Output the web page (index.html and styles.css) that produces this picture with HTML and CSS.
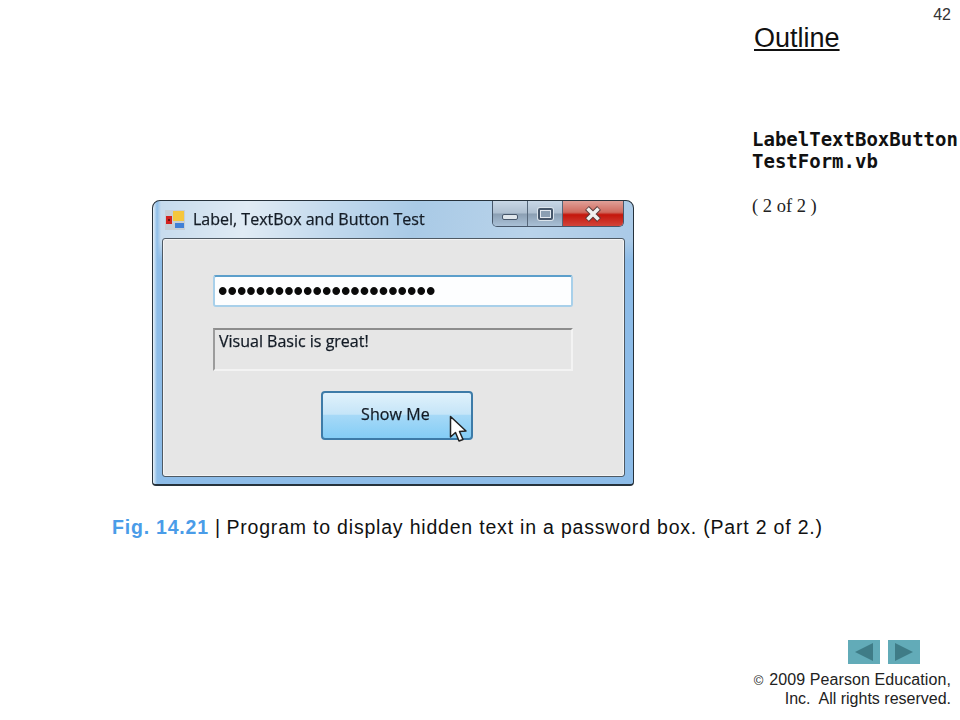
FILE: index.html
```html
<!DOCTYPE html>
<html>
<head>
  <title>Fig. 14.21</title>
  <link rel="stylesheet" href="styles.css">
</head>
<body>
  <div class="slide">
    <div class="upper">
      <div class="main">
        <div class="window">
          <div class="titlebar">
            <svg class="app-icon" width="20" height="20" viewBox="0 0 20 20">
              <rect x="0" y="0" width="20" height="20" fill="#c6ced6"/>
              <rect x="1" y="6" width="6" height="8" fill="#d3211f"/>
              <rect x="3" y="9" width="2" height="2" fill="#6b1010"/>
              <rect x="8" y="1" width="11" height="10" fill="#f5c63c"/>
              <rect x="10" y="13" width="9" height="5" fill="#3f7fd6"/>
            </svg>
            <span class="title">Label, TextBox and Button Test</span>
            <div class="controls">
              <div class="ctl ctl-min"><span class="min-glyph"></span></div>
              <div class="ctl ctl-max"><span class="max-glyph"></span></div>
              <div class="ctl ctl-close">
                <svg width="20" height="16" viewBox="0 0 20 16">
                  <path d="M4 2 L16 14 M16 2 L4 14" stroke="#5a3a3a" stroke-width="5.5"/>
                  <path d="M4.5 2.5 L15.5 13.5 M15.5 2.5 L4.5 13.5" stroke="#f0f0ee" stroke-width="3.6"/>
                </svg>
              </div>
            </div>
          </div>
          <div class="client">
            <div class="textbox">•••••••••••••••••••••••</div>
            <div class="label">Visual Basic is great!</div>
            <div class="button">
              Show Me
              <svg class="cursor" width="20" height="30" viewBox="0 0 20 30">
                <path d="M1.5 1.5 L1.5 22 L6.5 17.5 L10 26 L14 24.5 L10.5 16.5 L17 16 Z" fill="#fff" stroke="#222" stroke-width="1.5" stroke-linejoin="round"/>
              </svg>
            </div>
          </div>
        </div>
      </div>
      <div class="side">
        <div class="page-num">42</div>
        <div class="outline">Outline</div>
        <div class="filename">LabelTextBoxButton<br>TestForm.vb</div>
        <div class="part">( 2 of 2 )</div>
      </div>
    </div>
    <p class="caption"><b>Fig. 14.21</b><span class="bar">|</span>Program to display hidden text in a password box. (Part 2 of 2.)</p>
    <div class="footer">
      <div class="nav">
        <div class="nav-btn"><svg width="32" height="24" viewBox="0 0 32 24"><path d="M7 12 L25 3 L25 21 Z" fill="#3f7c87"/></svg></div>
        <div class="nav-btn"><svg width="32" height="24" viewBox="0 0 32 24"><path d="M25 12 L7 3 L7 21 Z" fill="#3f7c87"/></svg></div>
      </div>
      <div class="copy"><span class="copy-sign">©</span><span class="copy-first">2009 Pearson Education,</span><br>Inc.&nbsp; All rights reserved.</div>
    </div>
  </div>
</body>
</html>
```

FILE: styles.css
```css
html, body { margin: 0; padding: 0; background: #fff; }
body { font-family: "Liberation Sans", Arial, sans-serif; color: #111; }

.slide { width: 960px; height: 720px; display: flex; flex-direction: column; overflow: hidden; }
.upper { display: flex; height: 486px; }
.main { width: 752px; flex-shrink: 0; padding: 200px 0 0 152px; box-sizing: border-box; }

/* captured window */
.window {
  width: 482px; height: 286px; box-sizing: border-box; display: flex; flex-direction: column;
  padding: 0 9px 8px 9px; border: 1px solid #26323c; border-bottom-width: 2px; border-radius: 8px 8px 4px 4px;
  background:
    linear-gradient(90deg, #eaf2f8 0, #8dbde8 4px, transparent 8px),
    linear-gradient(180deg, transparent 40px, #8dbce8 60px),
    linear-gradient(100deg, #c3d9ec 0%, #e0ebf4 18%, #c2d9ed 34%, #a9cae6 50%, #b9d3ea 72%, #a4c6e6 100%);
  filter: blur(0.35px);
}
.titlebar { height: 38px; display: flex; align-items: flex-start; flex-shrink: 0; }
.app-icon { margin: 9px 0 0 3px; }
.title { font-family: "Open Sans", sans-serif; font-size: 16px; line-height: 20px; color: #141c26; -webkit-text-stroke: 0.25px #141c26; margin: 8px 0 0 8px; white-space: nowrap; }
.controls { margin-left: auto; display: flex; height: 25px; border: 1px solid #47576a; border-top: none; border-radius: 0 0 5px 5px; overflow: hidden; }
.ctl { display: flex; align-items: center; justify-content: center; box-sizing: border-box; }
.ctl-min, .ctl-max { width: 35px; background: linear-gradient(180deg, #c8d7e6 0%, #aebfd0 48%, #8b9fb3 52%, #a9c0d6 100%); border-right: 1px solid #55677a; }
.ctl-close { width: 60px; background: linear-gradient(180deg, #e0a098 0%, #cf6a5e 45%, #c4160c 55%, #d2443a 100%); }
.min-glyph { width: 16px; height: 6px; box-sizing: border-box; background: #dfe6ec; border: 1px solid #46566a; border-radius: 2px; margin-top: 6px; }
.max-glyph { width: 15px; height: 12px; box-sizing: border-box; background: #8b9fb3; border: 2px solid #46566a; border-radius: 2px; box-shadow: inset 0 0 0 1px #e2e9f0, 0 0 0 1px #dbe4ec; }

.client {
  flex: 1; box-sizing: border-box; padding: 35px 0 0 49px; background: #e6e6e6;
  border: 1px solid #f4f4f4; outline: 1px solid #4f5a64; border-radius: 2px;
  margin-left: 1px;
  font-family: "Open Sans", sans-serif; color: #121a24;
}
.textbox {
  width: 360px; height: 32px; box-sizing: border-box; background: #fdfeff;
  border: 2px solid #a8d0ea; border-top-color: #5c9fcb; border-radius: 3px;
  padding-left: 3px; font-family: "Liberation Sans", sans-serif; font-weight: bold; color: #0a0a0a;
  font-size: 27px; line-height: 28px; white-space: nowrap; overflow: hidden;
}
.label {
  width: 360px; height: 43px; box-sizing: border-box; margin-top: 21px;
  border: 2px solid #f3f3f3; border-top-color: #8d8d8d; border-left-color: #9c9c9c;
  padding-left: 4px; font-size: 16px; line-height: 22px; -webkit-text-stroke: 0.25px #121a24;
}
.button {
  position: relative; width: 152px; height: 49px; box-sizing: border-box; margin: 20px 0 0 108px;
  border: 2px solid #3d7ba8; border-radius: 4px; display: flex; align-items: center; justify-content: center;
  padding: 0 3px 4px 0; font-size: 16px; letter-spacing: 0.1px; -webkit-text-stroke: 0.25px #121a24;
  background: linear-gradient(180deg, #e0f1fb 0%, #c5e5f8 47%, #a6d9f7 50%, #84cdf6 100%);
}
.cursor { position: absolute; left: 126px; top: 22px; }

/* right column */
.side { flex: 1; min-width: 0; padding-right: 9px; }
.page-num { text-align: right; font-size: 16px; line-height: 18px; padding-top: 6px; color: #333; }
.outline { font-size: 27px; line-height: 32px; text-decoration: underline; margin: -2px 0 0 2px; }
.filename { font-family: "DejaVu Sans Mono", monospace; font-weight: bold; font-size: 19px; line-height: 22px; margin-top: 74px; white-space: nowrap; }
.part { font-family: "Liberation Serif", serif; font-size: 18.5px; line-height: 20px; margin-top: 24px; color: #222; }

.caption { margin: 29px 0 0 112px; font-size: 19.5px; letter-spacing: 0.8px; line-height: 24px; white-space: nowrap; }
.caption b { color: #4a9ce8; }
.bar { margin: 0 6.5px 0 6px; letter-spacing: 0; }

.footer { margin-top: auto; padding: 0 9px 12px 0; display: flex; flex-direction: column; align-items: flex-end; }
.nav { display: flex; gap: 8px; margin-right: 31px; }
.nav-btn { width: 32px; height: 24px; background: #62abb8; }
.nav-btn svg { display: block; }
.copy { font-size: 16px; line-height: 19px; text-align: right; margin-top: 6px; color: #222; }
.copy-sign { font-size: 13px; line-height: 0; margin-right: 6px; }
.copy-first { letter-spacing: 0.09px; }
```
